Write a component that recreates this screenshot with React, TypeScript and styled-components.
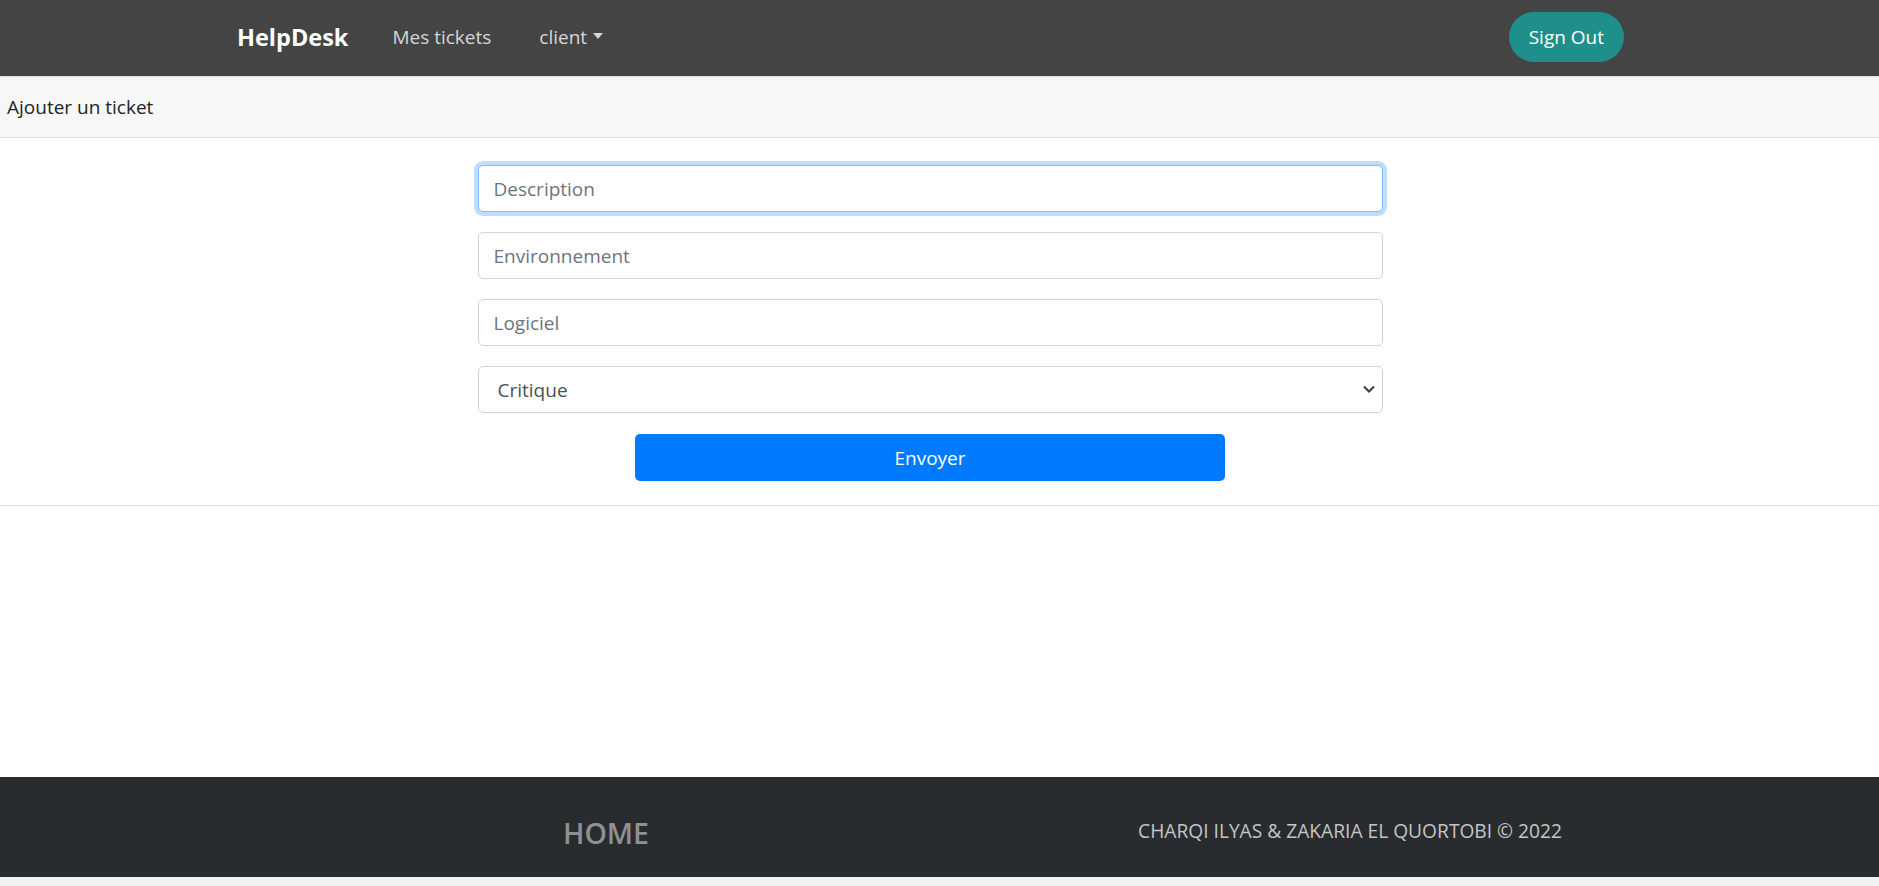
import * as React from "react";
import styled, { createGlobalStyle } from "styled-components";

const GlobalStyle = createGlobalStyle`
  html {
    background: #f1f1f1;
  }
  body {
    margin: 0;
    font-family: "Segoe UI", "Open Sans", sans-serif;
    font-size: 19px;
    color: #212529;
  }
  * {
    box-sizing: border-box;
  }
`;

const Page = styled.div`
  min-height: calc(100vh - 9px);
  display: flex;
  flex-direction: column;
  background: #fff;
`;

const NavBar = styled.nav`
  height: 76px;
  background: #444444;
  display: flex;
  align-items: center;
  padding: 0 255px 3px 237px;
`;

const Brand = styled.a`
  color: #fff;
  font-size: 23.5px;
  font-weight: 700;
  margin-right: 44px;
  text-decoration: none;
`;

const NavLink = styled.a<{ $caret?: boolean }>`
  color: #d6d6d6;
  font-size: 19px;
  margin-right: 48px;
  text-decoration: none;
  display: flex;
  align-items: center;

  ${(p) =>
    p.$caret &&
    `
    &::after {
      content: "";
      display: inline-block;
      margin-left: 6px;
      border-top: 6px solid #d6d6d6;
      border-left: 5px solid transparent;
      border-right: 5px solid transparent;
      transform: translateY(-1px);
    }
  `}
`;

const SignOut = styled.button`
  margin-left: auto;
  height: 50px;
  padding: 0 20px;
  border: none;
  border-radius: 25px;
  background: #1f8f8c;
  color: #fff;
  font-family: inherit;
  font-size: 19px;
`;

const Card = styled.section`
  border-top: 1px solid #dfdfdf;
  border-bottom: 1px solid #dfdfdf;
`;

const CardHeader = styled.div`
  height: 61px;
  display: flex;
  align-items: center;
  padding: 0 7px;
  background: #f7f7f7;
  border-bottom: 1px solid #dfdfdf;
`;

const CardBody = styled.div`
  padding: 27px 28px 24px 9px;
`;

const Form = styled.form`
  max-width: 905px;
  margin: 0 auto;
  display: flex;
  flex-direction: column;
  align-items: center;
`;

const Field = styled.input`
  width: 100%;
  height: 47px;
  margin-bottom: 20px;
  padding: 0 15px;
  border: 1px solid #ced4da;
  border-radius: 5px;
  font-family: inherit;
  font-size: 19px;
  color: #495057;
  outline: none;

  &::placeholder {
    color: #6c757d;
  }
  &:focus {
    border-color: #80bdff;
    box-shadow: 0 0 0 4px rgba(0, 123, 255, 0.25);
  }
`;

const SelectWrap = styled.div`
  position: relative;
  width: 100%;
  margin-bottom: 21px;
`;

const Select = styled.select`
  width: 100%;
  height: 47px;
  padding: 0 15px 0 19px;
  border: 1px solid #ced4da;
  border-radius: 5px;
  background: #fff;
  font-family: inherit;
  font-size: 19px;
  color: #495057;
  appearance: none;
  outline: none;
`;

const Chevron = styled.svg`
  position: absolute;
  right: 8px;
  top: 19px;
  pointer-events: none;
`;

const Submit = styled.button`
  width: 590px;
  height: 47px;
  border: none;
  border-radius: 5px;
  background: #007bff;
  color: #fff;
  font-family: inherit;
  font-size: 19px;
`;

const Footer = styled.footer`
  margin-top: auto;
  height: 100px;
  background: #292c2f;
  display: grid;
  grid-template-columns: 744px 744px;
  align-items: center;
  padding: 12px 0 0 234px;
`;

const FooterHome = styled.h4`
  margin: 0;
  text-align: center;
  font-size: 28.5px;
  font-weight: 600;
  color: #8f9092;
`;

const Copyright = styled.p`
  margin: 0 0 6px;
  text-align: center;
  font-size: 19.2px;
  color: #c4c5c6;
`;

export default function App() {
  return (
    <>
      <GlobalStyle />
      <Page>
        <NavBar>
          <Brand href="#">HelpDesk</Brand>
          <NavLink href="#">Mes tickets</NavLink>
          <NavLink href="#" $caret>
            client
          </NavLink>
          <SignOut>Sign Out</SignOut>
        </NavBar>
        <Card>
          <CardHeader>Ajouter un ticket</CardHeader>
          <CardBody>
            <Form onSubmit={(e) => e.preventDefault()}>
              <Field placeholder="Description" autoFocus />
              <Field placeholder="Environnement" />
              <Field placeholder="Logiciel" />
              <SelectWrap>
                <Select defaultValue="Critique">
                  <option>Critique</option>
                  <option>Majeur</option>
                  <option>Mineur</option>
                </Select>
                <Chevron width="12" height="8" viewBox="0 0 12 8">
                  <path d="M1 1.5l5 5 5-5" fill="none" stroke="#3a3a3a" strokeWidth="2" />
                </Chevron>
              </SelectWrap>
              <Submit type="submit">Envoyer</Submit>
            </Form>
          </CardBody>
        </Card>
        <Footer>
          <FooterHome>HOME</FooterHome>
          <Copyright>CHARQI ILYAS &amp; ZAKARIA EL QUORTOBI © 2022</Copyright>
        </Footer>
      </Page>
    </>
  );
}
